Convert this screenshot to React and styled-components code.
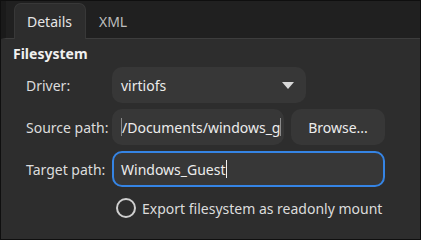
import React from 'react';
import styled, { createGlobalStyle } from 'styled-components';

const GlobalStyle = createGlobalStyle`
  html, body {
    margin: 0;
    padding: 0;
    background: #111111;
  }
  body {
    font-family: 'Noto Sans', 'DejaVu Sans', sans-serif;
    font-size: 14px;
    color: #e8e8e8;
  }
`;

const App = () => {
  return (
    <>
      <GlobalStyle />
      <Window>
        <TabBar>
          <Tab active>Details</Tab>
          <Tab>XML</Tab>
        </TabBar>
        <Page>
          <Heading>Filesystem</Heading>
          <Form>
            <Label>Driver:</Label>
            <Combo>
              <span>virtiofs</span>
              <svg width="12" height="7" viewBox="0 0 12 7">
                <path d="M0 0 H12 L6 7 Z" fill="#d8d8d8" />
              </svg>
            </Combo>

            <Label>Source path:</Label>
            <FieldRow>
              <Entry>
                <Caret />
                <EntryText>/Documents/windows_g</EntryText>
                <Caret />
              </Entry>
              <Button>Browse...</Button>
            </FieldRow>

            <Label>Target path:</Label>
            <Entry focused>
              <EntryText>Windows_Guest</EntryText>
              <Caret bright />
            </Entry>

            <span />
            <CheckRow>
              <Radio />
              <span>Export filesystem as readonly mount</span>
            </CheckRow>
          </Form>
        </Page>
      </Window>
    </>
  );
};

export default App;

const Window = styled.div`
  width: 419px;
  height: 238px;
  border: 1px solid #0f0f0f;
  background: #2d2d2d;
  display: flex;
  flex-direction: column;
  overflow: hidden;
`;

const TabBar = styled.div`
  height: 37px;
  background: #202020;
  border-bottom: 1px solid #3d3d3d;
  display: flex;
  align-items: flex-end;
  padding-left: 8px;
  border-left: 5px solid #1a1a1a;
`;

const Tab = styled.div`
  height: 35px;
  padding: 0 13px 0 12px;
  display: flex;
  align-items: center;
  border-radius: 7px 7px 0 0;
  border: 1px solid ${(p) => (p.active ? '#383838' : 'transparent')};
  border-bottom: none;
  background: ${(p) => (p.active ? '#2d2d2d' : 'transparent')};
  color: ${(p) => (p.active ? '#e6e6e6' : '#bdbdbd')};
  margin-bottom: -1px;
  font-size: 14px;
`;

const Page = styled.div`
  padding: 5px 0 0 12px;
`;

const Heading = styled.div`
  font-weight: bold;
  font-size: 14px;
  color: #f0f0f0;
  height: 20px;
  line-height: 20px;
`;

const Form = styled.div`
  display: grid;
  grid-template-columns: 86px 273px;
  row-gap: 6px;
  padding-left: 13px;
  margin-top: 3px;
  align-items: center;
`;

const Label = styled.div`
  color: #dcdcdc;
  font-size: 14px;
`;

const Combo = styled.div`
  width: 194px;
  height: 36px;
  box-sizing: border-box;
  border-radius: 10px;
  background: #373737;
  display: flex;
  align-items: center;
  justify-content: space-between;
  padding: 0 12px 0 9px;
  color: #ececec;
`;

const FieldRow = styled.div`
  display: flex;
  gap: 7px;
`;

const Entry = styled.div`
  flex: 1;
  height: 36px;
  box-sizing: border-box;
  border-radius: 10px;
  background: #373737;
  border: 2px solid ${(p) => (p.focused ? '#3584e4' : 'transparent')};
  display: flex;
  align-items: center;
  padding: 0 7px 0 7px;
  overflow: hidden;
  color: #ececec;
`;

const EntryText = styled.span`
  white-space: nowrap;
  font-size: 14px;
`;

const Caret = styled.span`
  display: inline-block;
  width: 1px;
  height: 18px;
  background: ${(p) => (p.bright ? '#f0f0f0' : '#8a8a8a')};
  flex-shrink: 0;
`;

const Button = styled.div`
  width: 94px;
  height: 36px;
  border-radius: 10px;
  background: #373737;
  display: flex;
  align-items: center;
  justify-content: center;
  color: #ececec;
  flex-shrink: 0;
`;

const CheckRow = styled.div`
  display: flex;
  align-items: center;
  gap: 6px;
  height: 30px;
  padding-left: 4px;
  color: #dcdcdc;
`;

const Radio = styled.span`
  width: 16px;
  height: 16px;
  border-radius: 50%;
  border: 2px solid #cfcfcf;
  flex-shrink: 0;
`;
